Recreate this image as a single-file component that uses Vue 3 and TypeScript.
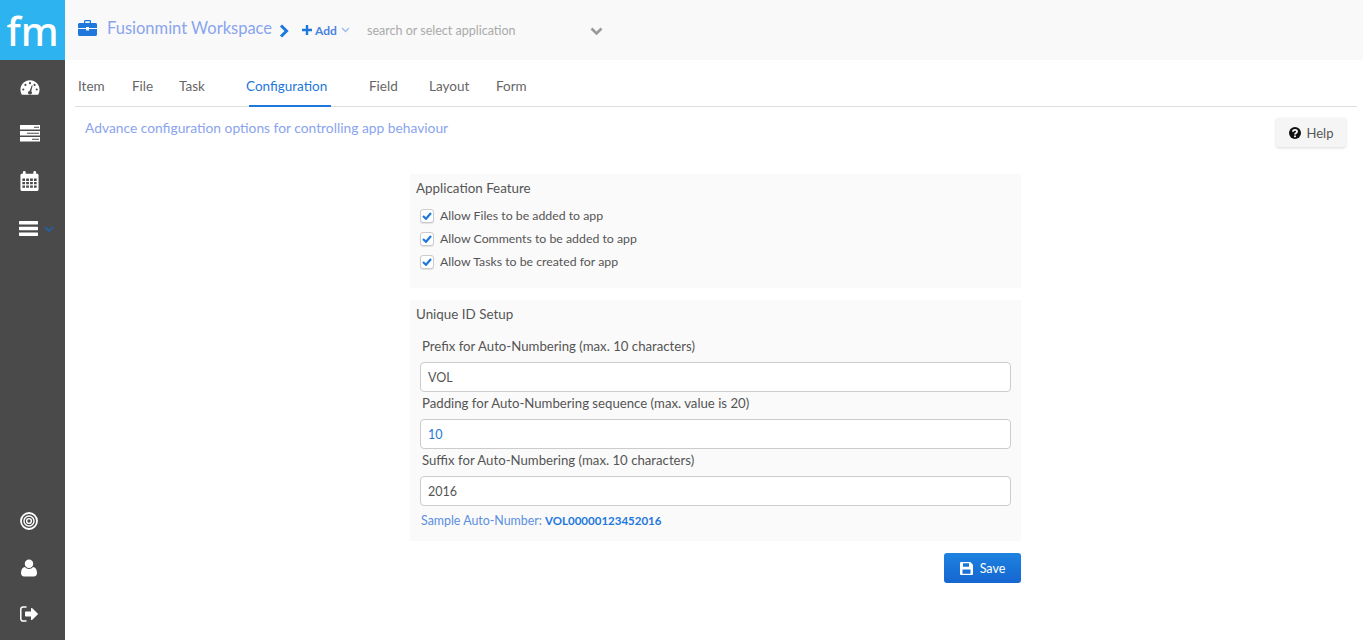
<script setup lang="ts">
const tabs: { label: string; active?: boolean; w: number }[] = [
  { label: 'Item', w: 54 },
  { label: 'File', w: 47 },
  { label: 'Task', w: 67 },
  { label: 'Configuration', active: true, w: 123 },
  { label: 'Field', w: 60 },
  { label: 'Layout', w: 67 },
  { label: 'Form', w: 40 },
]
const features = [
  'Allow Files to be added to app',
  'Allow Comments to be added to app',
  'Allow Tasks to be created for app',
]
const fields = [
  { label: 'Prefix for Auto-Numbering (max. 10 characters)', value: 'VOL', blue: false },
  { label: 'Padding for Auto-Numbering sequence (max. value is 20)', value: '10', blue: true },
  { label: 'Suffix for Auto-Numbering (max. 10 characters)', value: '2016', blue: false },
]
</script>

<template>
  <div class="app">
    <aside class="sidebar">
      <div class="logo">fm</div>
      <nav class="side-top">
        <svg class="si" width="20" height="17" viewBox="0 0 22 18">
          <path fill="#fff" fill-rule="evenodd" d="M11 1C5 1 .5 5.700.5 11.500c0 1.800.4 3.400 1.200 4.800.2.400.5.700 1 .7h16.600c.5 0 .8-.3 1-.7.800-1.400 1.200-3 1.200-4.800C21.500 5.700 17 1 11 1zM11 3a1.200 1.200 0 1 1 0 2.400A1.200 1.200 0 0 1 11 3zM6 5a1.200 1.200 0 1 1 0 2.400A1.200 1.200 0 0 1 6 5zm10 0a1.200 1.200 0 1 1 0 2.400A1.200 1.200 0 0 1 16 5zM3.600 10a1.200 1.200 0 1 1 0 2.400 1.200 1.200 0 0 1 0-2.400zm14.800 0a1.200 1.200 0 1 1 0 2.400 1.200 1.200 0 0 1 0-2.400zM13 6.500l.9.300-1.500 6.300c.5.400.8 1 .8 1.600 0 1.100-.9 1.900-2.200 1.900s-2.200-.8-2.200-1.900c0-1 .7-1.800 1.700-1.900z"/>
        </svg>
        <svg class="si" width="20" height="17" viewBox="0 0 20 17">
          <path fill="#fff" fill-rule="evenodd" d="M0 0h20v4.500H0zM14 1.700v1h5v-1zM0 6h20v4.500H0zM7 7.700v1h12v-1zM0 12h20v4.500H0zM12 13.700v1h7v-1z"/>
        </svg>
        <svg class="si" width="19" height="20" viewBox="0 0 19 21">
          <path fill="#fff" fill-rule="evenodd" d="M4 0a1.500 1.500 0 0 1 1.500 1.500V3h8V1.500a1.500 1.500 0 0 1 3 0V3h1A1.500 1.500 0 0 1 19 4.500v15a1.500 1.500 0 0 1-1.500 1.500h-16A1.500 1.500 0 0 1 0 19.500v-15A1.500 1.500 0 0 1 1.500 3h1V1.500A1.500 1.500 0 0 1 4 0zM2 8v2.400h2.800V8zm4 0v2.400h2.900V8zm4.100 0v2.400H13V8zm4.100 0v2.400H17V8zM2 11.600V14h2.800v-2.400zm4 0V14h2.900v-2.400zm4.100 0V14H13v-2.400zm4.100 0V14H17v-2.400zM2 15.200v2.400h2.800v-2.400zm4 0v2.400h2.900v-2.400zm4.100 0v2.400H13v-2.400zm4.100 0v2.400H17v-2.400z"/>
        </svg>
        <div class="bars-row">
          <svg width="19" height="15" viewBox="0 0 19 15">
            <path fill="#fff" d="M.5 0h18c.3 0 .5.200.5.500v2.500c0 .3-.2.500-.5.500H.5C.2 3.500 0 3.300 0 3V.5C0 .2.200 0 .5 0zm0 5.700h18c.3 0 .5.200.5.500v2.500c0 .3-.2.500-.5.500H.5c-.3 0-.5-.2-.5-.5V6.200c0-.3.200-.5.500-.5zm0 5.800h18c.3 0 .5.200.5.500v2.500c0 .3-.2.500-.5.500H.5c-.3 0-.5-.2-.5-.5V12c0-.3.200-.5.500-.5z"/>
          </svg>
          <svg class="bars-caret" width="10" height="7" viewBox="0 0 10 7">
            <path fill="none" stroke="#2a5c9c" stroke-width="2" d="M1 1l4 4 4-4"/>
          </svg>
        </div>
      </nav>
      <nav class="side-bottom">
        <svg class="si" width="18" height="18" viewBox="0 0 18 18">
          <g fill="none" stroke="#fff">
            <circle cx="9" cy="9" r="8" stroke-width="1.800"/>
            <circle cx="9" cy="9" r="5" stroke-width="1.400"/>
            <circle cx="9" cy="9" r="2.400" stroke-width="1.400"/>
          </g>
        </svg>
        <svg class="si" width="16" height="18" viewBox="0 0 17 18">
          <path fill="#fff" d="M8.500 0a4.500 4.500 0 1 1 0 9 4.500 4.500 0 0 1 0-9zM4.200 8c1 1.300 2.500 2 4.300 2s3.300-.7 4.300-2c2.500.4 4.200 2.500 4.200 6.200 0 2.300-1.300 3.800-3.300 3.800H3.300C1.300 18 0 16.500 0 14.200 0 10.500 1.700 8.400 4.200 8z"/>
        </svg>
        <svg class="si" width="18" height="16" viewBox="0 0 18 16">
          <path fill="#fff" d="M11 2.500c0-.5.600-.8 1-.4l5.700 5.400c.3.300.3.700 0 1l-5.700 5.400c-.4.400-1 .1-1-.4V10.500H5.800c-.4 0-.8-.3-.8-.8V6.300c0-.5.400-.8.800-.8H11z"/>
          <path fill="none" stroke="#fff" stroke-width="1.500" d="M6.500 1H3a2.200 2.200 0 0 0-2.200 2.200v9.600A2.200 2.200 0 0 0 3 15h3.500"/>
        </svg>
      </nav>
    </aside>

    <div class="main">
      <header class="topbar">
        <svg width="19" height="16" viewBox="0 0 19 16" class="brief">
          <path fill="#1e78dc" fill-rule="evenodd" d="M6 3V1.300C6 .6 6.600 0 7.300 0h4.400c.7 0 1.300.6 1.300 1.300V3h4.500c.8 0 1.500.7 1.500 1.500V8H11V7H8v1H0V4.500C0 3.700.7 3 1.500 3zm1.300 0h4.400V1.300H7.300zM0 9h8v1.500h3V9h8v5.500c0 .8-.7 1.500-1.500 1.500h-16C.7 16 0 15.300 0 14.500z"/>
        </svg>
        <span class="workspace">Fusionmint Workspace</span>
        <svg class="crumb" width="10" height="14" viewBox="0 0 10 14">
          <path fill="none" stroke="#1e78dc" stroke-width="3" d="M2 1.500L7.500 7 2 12.500"/>
        </svg>
        <svg class="plus" width="10" height="10" viewBox="0 0 10 10">
          <path fill="#1e78dc" d="M3.800 0h2.400v3.800H10v2.400H6.200V10H3.800V6.200H0V3.800h3.800z"/>
        </svg>
        <span class="add">Add</span>
        <svg class="add-caret" width="9" height="6" viewBox="0 0 9 6">
          <path fill="none" stroke="#9db9ee" stroke-width="1.300" d="M1 1l3.500 3.500L8 1"/>
        </svg>
        <span class="search">search or select application</span>
        <svg class="search-caret" width="13" height="9" viewBox="0 0 13 9">
          <path fill="none" stroke="#999" stroke-width="2.600" d="M1.500 1.500l5 5 5-5"/>
        </svg>
      </header>

      <div class="tabs">
        <a v-for="t in tabs" :key="t.label" class="tab" :class="{ active: t.active }" :style="{ width: t.w + 'px' }">{{ t.label }}</a>
      </div>

      <div class="intro">
        <p class="advance">Advance configuration options for controlling app behaviour</p>
        <button class="help" type="button">
          <svg width="12" height="12" viewBox="0 0 12 12">
            <circle cx="6" cy="6" r="6" fill="#111"/>
            <path fill="none" stroke="#fff" stroke-width="1.700" d="M3.900 4.700c0-1.200 1-1.900 2.100-1.900s2.100.7 2.100 1.800c0 1.500-2.100 1.300-2.100 2.900"/>
            <rect x="5.100" y="8.500" width="1.800" height="1.700" fill="#fff"/>
          </svg>
          Help
        </button>
      </div>

      <div class="column">
        <section class="panel feature">
          <h3>Application Feature</h3>
          <label v-for="f in features" :key="f" class="check">
            <span class="box">
              <svg width="10" height="8" viewBox="0 0 10 8">
                <path fill="none" stroke="#1e78dc" stroke-width="2.200" d="M1 4l3 2.800L9 1"/>
              </svg>
            </span>
            {{ f }}
          </label>
        </section>

        <section class="panel unique">
          <h3>Unique ID Setup</h3>
          <div v-for="f in fields" :key="f.label" class="field">
            <div class="field-label">{{ f.label }}</div>
            <div class="input" :class="{ blue: f.blue }">{{ f.value }}</div>
          </div>
          <div class="sample">Sample Auto-Number: <b>VOL00000123452016</b></div>
        </section>

        <div class="actions">
          <button class="save" type="button">
            <svg width="13" height="13" viewBox="0 0 13 13">
              <path fill="#fff" fill-rule="evenodd" d="M1 0h9.300L13 2.700V12a1 1 0 0 1-1 1H1a1 1 0 0 1-1-1V1a1 1 0 0 1 1-1zm2 1.200V4.800h6V1.200zM2.500 7.500v4.300h8V7.500z"/>
            </svg>
            Save
          </button>
        </div>
      </div>
    </div>
  </div>
</template>

<style>
html, body { margin: 0; background: #fff; }
</style>

<style scoped>
.app {
  display: flex;
  width: 1363px;
  height: 640px;
  overflow: hidden;
  font-family: "Lato", "Noto Sans", sans-serif;
  font-size: 13px;
  color: #555;
}
.sidebar {
  width: 65px;
  flex: none;
  background: #4a4a4a;
  display: flex;
  flex-direction: column;
}
.logo {
  width: 65px;
  height: 60px;
  background: #2db3ef;
  color: #fff;
  font-family: "Noto Sans", sans-serif;
  font-size: 40px;
  font-weight: 500;
  line-height: 61px;
  text-align: center;
  overflow: hidden;
}
.side-top {
  display: flex;
  flex-direction: column;
  align-items: flex-start;
  gap: 29px;
  padding: 19px 0 0 20px;
}
.side-bottom {
  margin-top: auto;
  display: flex;
  flex-direction: column;
  align-items: center;
  width: 18px;
  gap: 29px;
  padding: 0 0 18px 20px;
}
.si { display: block; }
.bars-row {
  display: flex;
  align-items: center;
  margin-top: 1px;
  margin-left: -1px;
  gap: 6px;
}
.bars-caret { margin-top: 2px; }
.main {
  flex: 1;
  min-width: 0;
}
.topbar {
  height: 60px;
  background: #f9f9f9;
  display: flex;
  align-items: center;
  padding-left: 13px;
}
.brief { margin-top: -4px; }
.workspace {
  margin-left: 10px;
  font-size: 16.5px;
  color: #8aa4ee;
  margin-top: -5px;
}
.crumb { margin-left: 7px; margin-top: 2px; }
.plus { margin-left: 13px; }
.add { margin-left: 3px; width: 21px; font-size: 12px; font-weight: 700; color: #4a84e0; white-space: nowrap; }
.add-caret { margin-left: 5px; }
.search { margin-left: 17px; font-size: 12.5px; color: #aaa; width: 223px; }
.search-caret { margin-top: 2px; }
.tabs {
  display: flex;
  margin: 0 6px 0 10px;
  height: 46px;
  border-bottom: 1px solid #ddd;
  padding-left: 3px;
}
.tab {
  display: block;
  position: relative;
  box-sizing: border-box;
  padding-top: 18px;
  color: #666;
  font-size: 13.5px;
  white-space: nowrap;
  height: 47px;
}
.tab.active { color: #1e78dc; }
.tab.active::after {
  content: "";
  position: absolute;
  left: 3px;
  width: 82px;
  bottom: 0;
  height: 2px;
  background: #1e78dc;
}
.intro {
  display: flex;
  justify-content: space-between;
  align-items: flex-start;
  padding: 11px 17px 0 20px;
  height: 67px;
  box-sizing: border-box;
}
.advance {
  margin: 1px 0 0;
  font-size: 13.8px;
  color: #8aa4ee;
}
.help {
  width: 70px;
  height: 29px;
  border: 0;
  border-radius: 3px;
  background: #f5f5f5;
  box-shadow: 0 1px 3px rgba(0, 0, 0, 0.15);
  font: inherit;
  font-size: 13px;
  color: #555;
  display: flex;
  align-items: center;
  justify-content: center;
  gap: 6px;
}
.column {
  width: 611px;
  margin-left: 345px;
  display: flex;
  flex-direction: column;
  gap: 12px;
}
.panel {
  background: #fafafa;
  box-sizing: border-box;
}
.panel h3 {
  margin: 0;
  font-size: 13.4px;
  font-weight: 400;
  color: #555;
}
.feature {
  height: 114px;
  padding: 5px 6px;
}
.feature h3 { margin-bottom: 7px; line-height: 18px; }
.check {
  display: flex;
  align-items: center;
  gap: 6px;
  height: 23px;
  margin-left: 4px;
  font-size: 12.3px;
}
.box {
  width: 12px;
  height: 12px;
  border: 1px solid #ccc;
  border-radius: 3px;
  background: #fff;
  display: flex;
  align-items: center;
  justify-content: center;
  box-shadow: 0 1px 1px rgba(0, 0, 0, 0.1);
}
.unique {
  height: 241px;
  padding: 5px 10px 0;
}
.unique h3 { margin-left: -4px; line-height: 18px; margin-bottom: 14px; }
.field { margin-bottom: 2px; }
.field-label {
  font-size: 13.2px;
  line-height: 18px;
  margin-left: 2px;
  margin-bottom: 7px;
}
.input {
  height: 30px;
  box-sizing: border-box;
  border: 1px solid #ccc;
  border-radius: 4px;
  background: #fff;
  padding: 0 7px;
  font-size: 12.5px;
  line-height: 29px;
  color: #555;
}
.input.blue { color: #1e78dc; }
.sample {
  margin-top: 7px;
  margin-left: 1px;
  font-size: 12.4px;
  color: #5b8fe0;
}
.sample b { color: #1e78dc; font-size: 11.5px; font-weight: 700; }
.actions {
  display: flex;
  justify-content: flex-end;
}
.save {
  width: 77px;
  height: 30px;
  border: 0;
  border-radius: 3px;
  background: linear-gradient(#1e82e0, #1566d0);
  color: #fff;
  font: inherit;
  font-size: 12.5px;
  display: flex;
  align-items: center;
  justify-content: center;
  gap: 7px;
}
</style>
